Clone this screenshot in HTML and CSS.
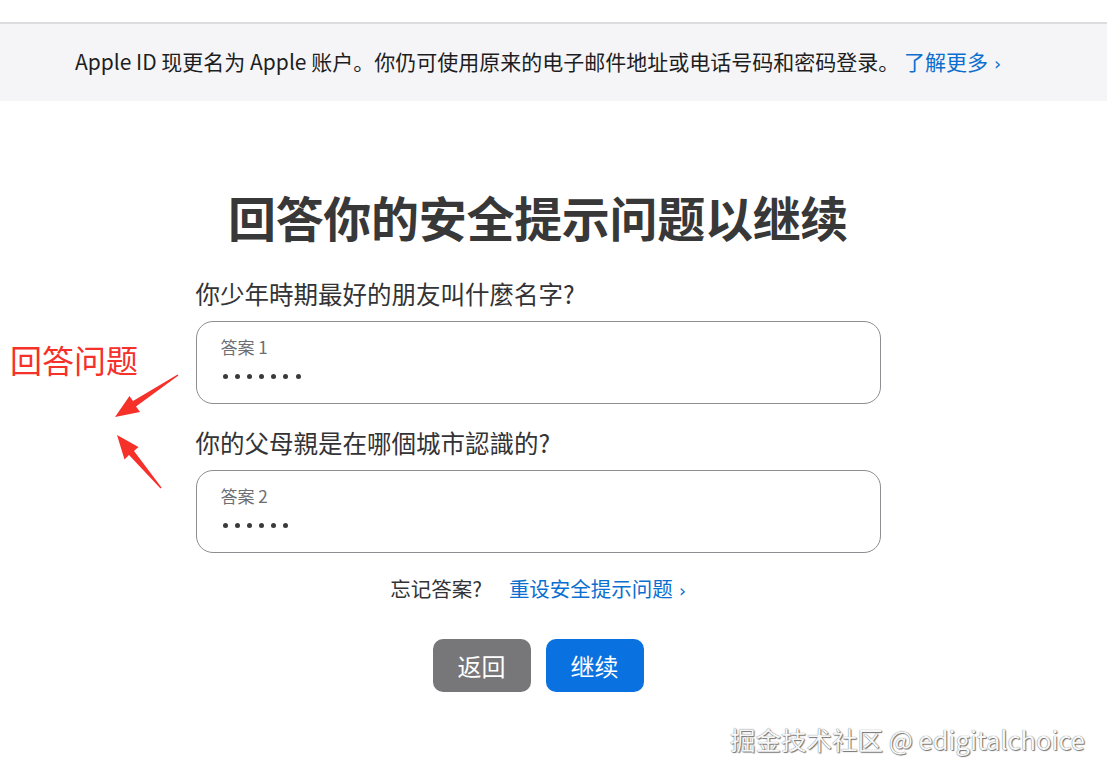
FILE: index.html
```html
<!DOCTYPE html>
<html lang="zh-CN">
<head>
<meta charset="utf-8">
<title>回答你的安全提示问题以继续</title>
<link rel="stylesheet" href="styles.css">
</head>
<body>
<div class="topbar"></div>
<div class="banner">
  <p class="banner-text">Apple ID 现更名为 Apple 账户。你仍可使用原来的电子邮件地址或电话号码和密码登录。 <a class="link" href="#">了解更多<span class="chev">›</span></a></p>
</div>
<main class="page">
  <h1 class="title">回答你的安全提示问题以继续</h1>
  <form class="form">
    <p class="question">你少年時期最好的朋友叫什麼名字?</p>
    <div class="field">
      <span class="label">答案 1</span>
      <span class="dots"><i></i><i></i><i></i><i></i><i></i><i></i><i></i></span>
    </div>
    <p class="question q2">你的父母親是在哪個城市認識的?</p>
    <div class="field">
      <span class="label">答案 2</span>
      <span class="dots"><i></i><i></i><i></i><i></i><i></i><i></i></span>
    </div>
  </form>
  <div class="forgot">
    <span class="forgot-q">忘记答案?</span>
    <a class="link" href="#">重设安全提示问题<span class="chev">›</span></a>
  </div>
  <div class="actions">
    <button class="btn btn-back" type="button">返回</button>
    <button class="btn btn-next" type="button">继续</button>
  </div>
</main>

<div class="note">回答问题</div>
<svg class="arrows" width="200" height="500" viewBox="0 0 200 500" aria-hidden="true">
  <polygon fill="#f5312a" points="115,417 129.5,396 133,401 177.6,374.4 178.4,375.6 136,406.5 140,412"/>
  <polygon fill="#f5312a" points="117,435 138.5,447 134,451 161.5,487.6 160.5,488.4 129,455 124.5,459.5"/>
</svg>
<div class="watermark">掘金技术社区 @ edigitalchoice</div>
</body>
</html>
```

FILE: styles.css
```css
* { box-sizing: border-box; }

html, body {
  margin: 0;
  padding: 0;
  background: #ffffff;
}

body {
  font-family: "Noto Sans CJK SC", "Noto Sans", sans-serif;
  color: #333336;
  width: 1107px;
  height: 779px;
  overflow: hidden;
  position: relative;
}

.topbar {
  height: 24px;
  border-bottom: 2px solid #dcdcde;
}

.banner {
  height: 77px;
  background: #f5f5f7;
  display: flex;
  align-items: center;
  justify-content: center;
  padding-right: 31px;
}

.banner-text {
  margin: 0;
  font-size: 21px;
  line-height: 28px;
  color: #1d1d1f;
  white-space: nowrap;
}

.link {
  color: #0a6fcf;
  text-decoration: none;
}

.chev {
  display: inline-block;
  margin-left: 6px;
  font-family: "DejaVu Sans", sans-serif;
  font-size: 0.85em;
}

.page {
  width: 1076px;
  display: flex;
  flex-direction: column;
  align-items: center;
}

.title {
  margin: 86px 0 0;
  font-size: 48px;
  line-height: 58px;
  font-weight: 700;
  color: #383838;
  letter-spacing: -0.3px;
}

.form {
  width: 685px;
  margin-top: 32px;
  display: flex;
  flex-direction: column;
}

.question {
  margin: 0;
  font-size: 24.5px;
  line-height: 34px;
  color: #333336;
}

.q2 {
  margin-top: 22px;
}

.field {
  height: 83px;
  margin-top: 10px;
  border: 1.5px solid #8d8d92;
  border-radius: 17px;
  padding: 13px 24px 0;
  display: flex;
  flex-direction: column;
  align-items: flex-start;
}

.q2 + .field {
  margin-top: 10px;
}

.label {
  font-size: 17px;
  line-height: 24px;
  color: #6e6e73;
}

.dots {
  margin-top: 7px;
  height: 20px;
  display: flex;
  align-items: center;
  gap: 7.2px;
  padding-left: 2px;
}

.dots i {
  width: 5px;
  height: 5px;
  border-radius: 50%;
  background: #3a3a3c;
}

.forgot {
  margin-top: 21px;
  font-size: 20.5px;
  line-height: 28px;
  display: flex;
  gap: 27px;
}

.forgot-q {
  color: #333336;
}

.actions {
  margin-top: 34px;
  display: flex;
  gap: 15px;
}

.btn {
  width: 98px;
  height: 53px;
  border: none;
  border-radius: 10px;
  color: #ffffff;
  font-family: "Noto Sans CJK SC", sans-serif;
  font-size: 24px;
  line-height: 53px;
  padding: 0;
}

.btn-back {
  background: #77777a;
}

.btn-next {
  background: #0a72e0;
}

.note {
  position: absolute;
  left: 10px;
  top: 338px;
  font-size: 32px;
  line-height: 42px;
  color: #f5312a;
  font-family: "Noto Sans CJK SC", sans-serif;
}

.arrows {
  position: absolute;
  left: 0;
  top: 0;
}

.watermark {
  position: absolute;
  right: 22px;
  top: 722px;
  font-size: 25.5px;
  line-height: 34px;
  color: #f7f7f7;
  font-family: "Noto Sans CJK SC", sans-serif;
  text-shadow: 0 0 1px #555, 1px 1px 1px #777;
}
```
